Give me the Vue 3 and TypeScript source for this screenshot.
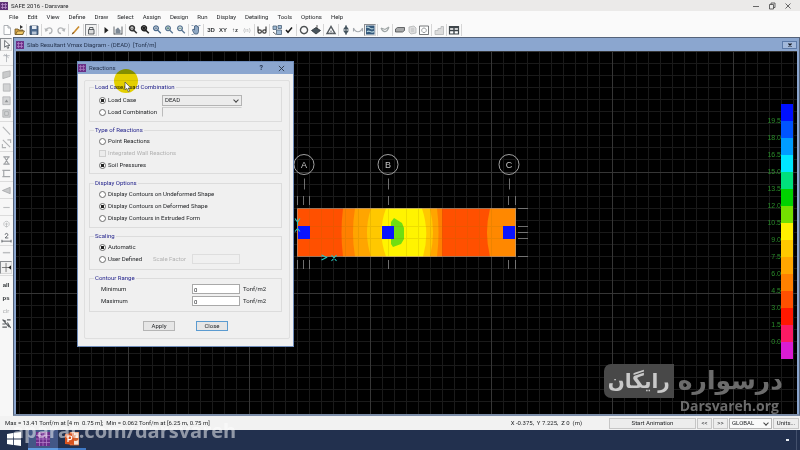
<script setup lang="ts">
import { ref } from 'vue'

interface Shape { d: string; f?: string; s?: string; w?: number }
interface Tool { name: string; shapes?: Shape[]; text?: string; dim?: boolean; boxed?: boolean }

const menus = ['File', 'Edit', 'View', 'Define', 'Draw', 'Select', 'Assign', 'Design', 'Run', 'Display', 'Detailing', 'Tools', 'Options', 'Help']

const ink = '#3c4248'
const soft = '#b4b6b8'
const lens = 'M5 1.8a2.4 2.4 0 1 0 .01 0M6.8 6.3l3 3'

const toolGroups: Tool[][] = [
  [
    { name: 'New', shapes: [{ d: 'M3 1.5h4l2.5 2.5v6.5h-6.5zM7 1.5v2.5h2.5', f: '#fff', s: '#9b9ea3' }] },
    { name: 'Open', shapes: [{ d: 'M2 5h3l1 1h4v4.500h-8z', f: '#d9a441', s: '#6b5426' }, { d: 'M2.500 10.500l2-3.500h7l-2 3.500z', f: '#f0c766', s: '#6b5426' }, { d: 'M7 1l3 2-3 2z', f: '#333' }] }
  ],
  [{ name: 'Save', shapes: [{ d: 'M2 2h8v8.500h-8z', f: '#4d6a8f', s: '#33475f' }, { d: 'M4 2h4.500v3h-4.500z', f: '#e8edf3' }, { d: 'M4 7.500h4.500v3h-4.500z', f: '#b9c6d6' }] }],
  [
    { name: 'Undo', shapes: [{ d: 'M3 6c1-3 6-3 6 .5 0 2-1.500 3-3 3', s: soft, w: 1.3 }, { d: 'M1.500 4l1 4 3-2z', f: soft }] },
    { name: 'Redo', shapes: [{ d: 'M9 6c-1-3-6-3-6 .5 0 2 1.500 3 3 3', s: soft, w: 1.3 }, { d: 'M10.500 4l-1 4-3-2z', f: soft }] }
  ],
  [{ name: 'Refresh', shapes: [{ d: 'M3 9.500l6-7', s: '#c98a2c', w: 1.6 }, { d: 'M2.300 10.300l1-2', s: '#5c3c16', w: 1 }] }],
  [{ name: 'Lock', boxed: true, shapes: [{ d: 'M3.500 5.500h5.500v4.500h-5.500z', f: '#dcdcdc', s: ink }, { d: 'M4.500 5.500v-2h3.500v2', s: ink }] }],
  [
    { name: 'Run', shapes: [{ d: 'M4.500 3l4 3.200-4 3.200z', f: '#222' }] },
    { name: 'Run detailing', shapes: [{ d: 'M2 2.500v8M10 2.500v8M2 10h8', s: ink }, { d: 'M3.500 5.500l2.500-2 2.500 3v3h-5z', f: '#7b8794' }] }
  ],
  [
    { name: 'Rubber band zoom', shapes: [{ d: lens, s: '#333', w: 1.6 }, { d: 'M3.500 4.200h3', s: '#333' }] },
    { name: 'Zoom all', shapes: [{ d: lens, s: '#222', w: 1.6 }, { d: 'M3.500 2.800h3v3h-3z', f: '#222' }] },
    { name: 'Restore zoom', shapes: [{ d: lens, s: '#4b6a8c', w: 1.3 }, { d: 'M3.500 4.200h3M5 2.700v3', s: '#4b6a8c' }] },
    { name: 'Zoom in', shapes: [{ d: lens, s: '#5a7694', w: 1.3 }, { d: 'M3.500 4.200h3M5 2.700v3', s: '#2e6a60' }] },
    { name: 'Zoom out', shapes: [{ d: lens, s: '#5a7694', w: 1.3 }, { d: 'M3.500 4.200h3', s: '#2e6a60' }] }
  ],
  [{ name: 'Pan', shapes: [{ d: 'M3 5l1.500 1v-4h1v-.5h1v.5h1v.8h1v5l-1 2.200h-3l-2-3.500z', f: '#8fa8c4', s: '#3d5877' }, { d: 'M1.500 1.500h2M8.500 1.500h2M1.500 10.500h2', s: '#7c93ad' }] }],
  [
    { name: '3D view', text: '3D' },
    { name: 'Plan view', text: 'XY' },
    { name: 'Elevation view', text: '↑z' },
    { name: 'Named view', text: '(n)', dim: true }
  ],
  [{ name: 'Display options', shapes: [{ d: 'M2 2.500v5M10 2.500v5M2 7.500a1.700 1.700 0 1 0 3.400 0a1.700 1.700 0 1 0-3.400 0M6.700 7.500a1.700 1.700 0 1 0 3.400 0a1.700 1.700 0 1 0-3.400 0', s: '#3a3a3a', w: 1.2 }] }],
  [
    { name: 'Assign to group', shapes: [{ d: 'M2 2h3.500v3.500h-3.500zM7 1.500h3.500v3h-3.500zM5.500 6h5v4.500h-5z', f: '#9fb9d2', s: '#4c6278' }, { d: 'M2 8l3 2.500', s: ink }] },
    { name: 'Object options', shapes: [{ d: 'M3 6l2 2.300 4-4.800', s: '#1c1c1c', w: 1.5 }] }
  ],
  [
    { name: 'Property circle', shapes: [{ d: 'M6 2.500a3.600 3.600 0 1 0 .01 0', s: '#4c5052', w: 1.4 }] },
    { name: 'Point load', shapes: [{ d: 'M1.500 6.500l4.500-3 4.500 3-4.500 3.500z', f: '#48545c', s: '#2d3439' }, { d: 'M7 1v4', s: '#333' }] }
  ],
  [{ name: 'Undeformed shape', shapes: [{ d: 'M2 9.500l4-7 4 7z', f: '#fff', s: '#555b60', w: 1.5 }, { d: 'M4.500 9.500l1.500-3 1.500 3', s: '#8a8f94' }] }],
  [
    { name: 'Show loads', shapes: [{ d: 'M6 1.500l3 4h-6zM3 6.500h6l-3 4z', f: '#44545e' }, { d: 'M6 1v10', s: '#44545e' }] },
    { name: 'Deformed shape', shapes: [{ d: 'M1.500 4c2 5 7 5 9 0M1.500 4v3.500M10.500 4v3.500', s: '#a4a9ae', w: 1.1 }] },
    { name: 'Slab forces', boxed: true, shapes: [{ d: 'M2 1.500h8.500v9h-8.500z', f: '#34597c' }, { d: 'M2.500 3.500c3-2 3 3 7 1M3 8c2-3 4 2 7-.5', s: '#b9d6df', w: 1.2 }] }
  ],
  [{ name: 'Strip forces', shapes: [{ d: 'M2 4c2 5 6 5 8-1M2 4l4 1.500 4-2.500', s: '#9fa6a6', w: 1.1 }] }],
  [
    { name: 'Beam design', shapes: [{ d: 'M1.500 5l2-1.500h7v3l-2 1.500h-7z', f: '#a7a9aa', s: '#484a4c' }] },
    { name: 'Slab design', shapes: [{ d: 'M3 3l5-1 2 2v5l-5 1-2-2z', f: '#dedede', s: soft }, { d: 'M5 5h3M5 7h3', s: soft }] },
    { name: 'Punching check', shapes: [{ d: 'M1.500 2h9v8.500h-9z', f: '#fff', s: '#55595c' }, { d: 'M6 4a2.300 2.300 0 1 0 .01 0', s: '#85898c' }] }
  ],
  [{ name: 'Detailing', shapes: [{ d: 'M2 10.500v-4h3v-2h3v-2h2.500v8z', f: '#dcdcdc', s: soft }] }],
  [{ name: 'Tables', shapes: [{ d: 'M1.500 2.500h9v7.500h-9z', f: '#fff', s: '#3f464b', w: 1.2 }, { d: 'M1.500 3.500h9M1.500 6.500h9M6 2.500v7.500', s: '#3f464b', w: 1.4 }] }]
]

const sideGroups: Tool[][] = [
  [
    { name: 'Select', boxed: true, shapes: [{ d: 'M4 1.500v7.500l2-1.700 1.300 3 1.200-.6-1.300-2.700h2.500z', f: '#fff', s: '#3a3f44' }] },
    { name: 'Reshape', shapes: [{ d: 'M6 2v9M2.500 4h7M3.500 2.500l5 4', s: '#a5a9ae' }] }
  ],
  [
    { name: 'Draw slab', shapes: [{ d: 'M2 3.500l8-1.500v6l-8 2.500z', f: '#c9cacb', s: '#a8aaac' }] },
    { name: 'Draw rectangle', shapes: [{ d: 'M2.500 2h7.500v8h-7.500z', f: '#d2d3d4', s: '#aaacae' }] },
    { name: 'Quick draw slab', shapes: [{ d: 'M2 2h8v8.500h-8z', f: '#d4d5d6', s: '#aaacae' }, { d: 'M4 8l2-3 2 3z', f: '#8f9294' }] },
    { name: 'Quick draw area', shapes: [{ d: 'M2 2h8v8h-8zM4 4h4v4h-4z', f: '#d4d5d6', s: '#a1a3a5' }] }
  ],
  [
    { name: 'Draw line', shapes: [{ d: 'M2 2l8 8.500', s: '#b4b6b8', w: 1.2 }] },
    { name: 'Quick draw line', shapes: [{ d: 'M2 2l8 8M1.500 6.500v4h4M7 2h3.500v3.500', s: '#b0b2b4', w: 1.2 }] }
  ],
  [
    { name: 'Draw column', shapes: [{ d: 'M2.500 2h7M2.500 10h7M3.500 2l5 8M8.500 2l-5 8', s: '#9c9fa2', w: 1.2 }] },
    { name: 'Draw wall', shapes: [{ d: 'M10 2.500h-7v7h7M1.500 2.500h2M1.500 9.500h2', s: '#a3a6a9', w: 1.3 }] }
  ],
  [{ name: 'Draw strip', shapes: [{ d: 'M1.500 6l8.500-3.500v7z', f: '#c7c9ca', s: '#a0a2a4' }] }],
  [{ name: 'Draw tendon', shapes: [{ d: 'M2.500 6h7', s: '#bcbec0', w: 1.2 }] }],
  [
    { name: 'Draw point', shapes: [{ d: 'M6 2.500a3 3 0 1 0 .01 0M4.500 5.500h3M6 4v5', s: '#b4b6b8' }] },
    { name: 'Dimension', shapes: [{ d: 'M1 8.500v3M11 8.500v3M1 10h10', s: '#3c4248' }, { d: 'M4.500 3c0-2 3-2 3 0 0 1.500-2 2-3 3.500h3.500', s: '#3c4248' }] }
  ],
  [
    { name: 'Design strip', shapes: [{ d: 'M2 4h8', s: '#bcbec0', w: 1.6 }] },
    { name: 'Snap', boxed: true, shapes: [{ d: 'M5.500 1v10M1 6h8', s: '#555' }, { d: 'M8 6l3-2.500v5z', f: '#222' }] }
  ],
  [
    { name: 'Select all', text: 'all' },
    { name: 'Previous selection', text: 'ps' },
    { name: 'Clear selection', text: 'clr', dim: true },
    { name: 'Intersecting line', shapes: [{ d: 'M1.500 2l4 1.500M6.500 2h4M1.500 6.500h3.500M7 5l3.500 6M1.500 10h5M2 2l7 8', s: '#5a5e62', w: 1.2 }] }
  ]
]

const gridLetters = [{ label: 'A', x: 304 }, { label: 'B', x: 388 }, { label: 'C', x: 509 }]
const tickX = [297.5, 303.5, 309.5, 388.5, 508.5, 515.5]
const tickY = [208.5, 226.5, 232.5, 238.5, 256.5]

const legend = [
  { c: '#0010ff', v: '19.5' }, { c: '#0054ff', v: '18.0' }, { c: '#009cff', v: '16.5' },
  { c: '#00e6ff', v: '15.0' }, { c: '#00e07c', v: '13.5' }, { c: '#00d200', v: '12.0' },
  { c: '#74e000', v: '10.5' }, { c: '#fff000', v: '9.0' }, { c: '#ffc800', v: '7.5' },
  { c: '#ffa600', v: '6.0' }, { c: '#ff8000', v: '4.5' }, { c: '#ff5000', v: '3.0' },
  { c: '#ff1800', v: '1.5' }, { c: '#fb1a64', v: '0.0' }, { c: '#da1cd2', v: '' }
]

const source = ref('case')
const reaction = ref('soil')
const contours = ref('deformed')
const scaling = ref('auto')
const minimum = ref('0')
const maximum = ref('0')
</script>

<template>
  <div class="app">
    <header class="titlebar">
      <svg class="logo" viewBox="0 0 8 8"><rect width="8" height="8" fill="#5e3176" /><path d="M1 2.500h6M1 5.500h6M2.500 1v6M5.500 1v6" stroke="#b78bc9" stroke-width=".8" /></svg>
      <h1>SAFE 2016 - Darsvare</h1>
      <div class="winbtns">
        <button aria-label="Minimize"><svg viewBox="0 0 8 8"><path d="M1 4.500h6" /></svg></button>
        <button aria-label="Restore"><svg viewBox="0 0 8 8"><path d="M1.500 2.500h4v4.500h-4zM3 2.500v-1.500h4v4.500h-1.500" /></svg></button>
        <button aria-label="Exit"><svg viewBox="0 0 8 8"><path d="M1.500 1.500l5 5M6.500 1.500l-5 5" /></svg></button>
      </div>
    </header>

    <nav class="menubar">
      <button v-for="m in menus" :key="m">{{ m }}</button>
    </nav>

    <div class="toolbar">
      <div v-for="(g, gi) in toolGroups" :key="gi" class="group">
        <button v-for="t in g" :key="t.name" :aria-label="t.name" :class="{ boxed: t.boxed, dim: t.dim }">
          <template v-if="t.text">{{ t.text }}</template>
          <svg v-else viewBox="0 0 12 12"><path v-for="(p, i) in t.shapes" :key="i" :d="p.d" :fill="p.f ?? 'none'" :stroke="p.s ?? 'none'" :stroke-width="p.w ?? 0.8" /></svg>
        </button>
      </div>
    </div>

    <main class="work">
      <div class="sidebar">
        <div v-for="(g, gi) in sideGroups" :key="gi" class="sidegroup">
          <button v-for="t in g" :key="t.name" :aria-label="t.name" :class="{ boxed: t.boxed, dim: t.dim }">
            <template v-if="t.text">{{ t.text }}</template>
            <svg v-else viewBox="0 0 12 12"><path v-for="(p, i) in t.shapes" :key="i" :d="p.d" :fill="p.f ?? 'none'" :stroke="p.s ?? 'none'" :stroke-width="p.w ?? 0.8" /></svg>
          </button>
        </div>
      </div>

      <section class="child">
        <div class="childtitle">
          <svg class="logo" viewBox="0 0 8 8"><rect width="8" height="8" fill="#6b3187" /><path d="M1 2.500h6M1 5.500h6M2.500 1v6M5.500 1v6" stroke="#b07cc6" stroke-width=".8" /></svg>
          <h2>Slab Resultant Vmax Diagram - (DEAD)&nbsp; [Tonf/m]</h2>
          <button aria-label="Close diagram"><svg viewBox="0 0 6 6"><path d="M1.500 1.500l3 3M4.500 1.500l-3 3" /></svg></button>
        </div>
        <div class="canvas">
          <svg class="gridfill">
            <defs>
              <pattern id="major" x="112" y="0" width="121" height="121" patternUnits="userSpaceOnUse">
                <path v-for="n in 9" :key="'v' + n" :d="`M${n * 12 + 0.5} 0v121`" stroke="#1a1a1a" />
                <path v-for="n in 9" :key="'h' + n" :d="`M0 ${n * 12 + 0.5}h121`" stroke="#1a1a1a" />
                <path d="M.5 0v121M0 .5h121" stroke="#363636" />
              </pattern>
            </defs>
            <rect width="100%" height="100%" fill="url(#major)" />
          </svg>

          <svg class="model" viewBox="16 51 560 340">
            <g stroke-width="1">
              <path d="M297 208.500h219v48h-219z" fill="#ff5000" />
              <path d="M343 208.500h99v48h-99q-3-24 0-48z" fill="#ff8000" />
              <path d="M355 208.500h82q3 24 0 48h-82q-4-24 0-48z" fill="#ffa500" />
              <path d="M371 208.500h59q6 24 0 48h-59q-8-24 0-48z" fill="#ffc800" />
              <path d="M386 208.500h36q8 24 1 48h-37q-9-24 0-48z" fill="#fff400" />
              <path d="M490 208.500h26v48h-26q-6-24 0-48z" fill="#ff8800" />
              <path d="M394 218l8 5 2 5v11l-3 5-8 3-2-3v-22z" fill="#70de10" />
              <path d="M309.500 209v47M321.500 209v47M333.500 209v47M345.500 209v47M358.500 209v47M370.500 209v47M406.500 209v47M418.500 209v47M430.500 209v47M442.500 209v47M455.500 209v47M467.500 209v47M479.500 209v47M491.500 209v47M297 226.500h218M297 238.500h218M388.500 209v47" stroke="#9c7000" opacity=".16" />
              <path d="M297.500 208.500h218v48h-218z" fill="none" stroke="#a8a090" opacity=".6" />
              <path d="M298 226h12v13h-12zM382 226h12v13h-12zM503 226h12v13h-12z" fill="#0a14ff" />
            </g>
            <path v-for="x in tickX" :key="x" :d="`M${x} 196v9M${x} 260v9`" stroke="#8a8a8a" stroke-width=".8" />
            <path v-for="y in tickY" :key="y" :d="`M518 ${y}h10`" stroke="#8a8a8a" stroke-width=".8" />
            <g v-for="g in gridLetters" :key="g.label">
              <circle :cx="g.x" cy="164.500" r="10" fill="none" stroke="#b0b0b0" stroke-width=".9" />
              <path :d="`M${g.x + 0.5} 178.500v11`" stroke="#8a8a8a" stroke-width=".8" />
              <text :x="g.x" y="168" text-anchor="middle" class="letter">{{ g.label }}</text>
            </g>
            <path d="M295 218.500l2.500 3.500 2.500-3.500M297.500 222v3.500M295 231.500l2.500-3 2.500 3M321.500 255l5 2.500-5 2.500M331.500 255l5 6M336.500 255l-5 6" fill="none" stroke="#28c4bc" stroke-width="1.100" />
          </svg>

          <ul class="legend">
            <li v-for="s in legend" :key="s.c"><span class="value">{{ s.v }}</span><i :style="{ background: s.c }"></i></li>
          </ul>

          <div class="brand" dir="rtl">
            <div class="brandline"><span>درسواره</span><b>رایگان</b></div>
            <div class="brandurl" dir="ltr">Darsvareh.org</div>
          </div>
        </div>
      </section>
    </main>

    <footer class="status">
      <span class="range">Max = 13.41 Tonf/m at [4 m&nbsp; 0.75 m];&nbsp; Min = 0.062 Tonf/m at [6.25 m, 0.75 m]</span>
      <span class="coords">X -0.375,&nbsp; Y 7.225,&nbsp; Z 0&nbsp; (m)</span>
      <button class="start">Start Animation</button>
      <button class="step">&lt;&lt;</button>
      <button class="step">&gt;&gt;</button>
      <span class="pick global"><select aria-label="Coordinate system"><option>GLOBAL</option></select></span>
      <button class="units">Units...</button>
    </footer>

    <div class="taskbar">
      <button class="task" aria-label="Start"><svg viewBox="0 0 14 14"><path d="M0 2l6-.9v5.500h-6zM6.800 1l7.200-1v6.600h-7.200zM0 7.400h6v5.500l-6-.9zM6.800 7.400h7.200v6.600l-7.200-1z" fill="#fff" /></svg></button>
      <button class="task active" aria-label="SAFE"><svg viewBox="0 0 14 14"><rect width="14" height="14" fill="#6d2d8c" /><path d="M0 3.500h14M0 7h14M0 10.500h14M3.500 0v14M7 0v14M10.500 0v14" stroke="#b985cf" stroke-width=".7" /></svg></button>
      <button class="task open" aria-label="PowerPoint"><svg viewBox="0 0 14 14"><path d="M5 0h9v13h-9z" fill="#f6e3d8" stroke="#d2622f" stroke-width=".8" /><path d="M10.500 3v3h3a3 3 0 1 1-3-3" fill="#d2622f" /><path d="M0 2l9-1v12l-9-1z" fill="#d9531e" /><path d="M3 10v-6h2a1.800 1.800 0 0 1 0 3.600h-2" fill="none" stroke="#fff" stroke-width="1.200" /></svg></button>
      <span class="tray"></span>
    </div>
    <div class="watermark">aparat.com/darsvareh</div>

    <form class="dialog" role="dialog" aria-label="Reactions" @submit.prevent>
      <div class="dialogtitle">
        <svg class="logo" viewBox="0 0 8 8"><rect width="8" height="8" fill="#6b3187" /><path d="M1 2.500h6M1 5.500h6M2.500 1v6M5.500 1v6" stroke="#a273ba" stroke-width=".8" /></svg>
        <h2>Reactions</h2>
        <button type="button" class="help">?</button>
        <button type="button" aria-label="Close dialog"><svg viewBox="0 0 8 8"><path d="M1 1l6 6M7 1l-6 6" /></svg></button>
      </div>
      <div class="panel">
        <fieldset class="first">
          <legend>Load Case/Load Combination</legend>
          <div class="row">
            <label class="lead"><input v-model="source" type="radio" value="case" name="source" />Load Case</label>
            <span class="pick"><select aria-label="Load case name"><option>DEAD</option></select></span>
          </div>
          <div class="row">
            <label class="lead"><input v-model="source" type="radio" value="combo" name="source" />Load Combination</label>
            <input class="blank" type="text" disabled aria-label="Load combination name" />
          </div>
        </fieldset>
        <fieldset class="second">
          <legend>Type of Reactions</legend>
          <label class="row"><input v-model="reaction" type="radio" value="point" name="reaction" />Point Reactions</label>
          <label class="row off"><input type="checkbox" disabled />Integrated Wall Reactions</label>
          <label class="row"><input v-model="reaction" type="radio" value="soil" name="reaction" />Soil Pressures</label>
        </fieldset>
        <fieldset class="third">
          <legend>Display Options</legend>
          <label class="row"><input v-model="contours" type="radio" value="undeformed" name="contours" />Display Contours on Undeformed Shape</label>
          <label class="row"><input v-model="contours" type="radio" value="deformed" name="contours" />Display Contours on Deformed Shape</label>
          <label class="row"><input v-model="contours" type="radio" value="extruded" name="contours" />Display Contours in Extruded Form</label>
        </fieldset>
        <fieldset>
          <legend>Scaling</legend>
          <label class="row"><input v-model="scaling" type="radio" value="auto" name="scaling" />Automatic</label>
          <div class="row">
            <label class="user"><input v-model="scaling" type="radio" value="user" name="scaling" />User Defined</label>
            <label class="off factor" for="factor">Scale Factor</label>
            <input id="factor" class="num" type="text" disabled />
          </div>
        </fieldset>
        <fieldset>
          <legend>Contour Range</legend>
          <div class="row"><label class="bound" for="min">Minimum</label><input id="min" v-model="minimum" class="num" type="text" /><span class="unit">Tonf/m2</span></div>
          <div class="row"><label class="bound" for="max">Maximum</label><input id="max" v-model="maximum" class="num" type="text" /><span class="unit">Tonf/m2</span></div>
        </fieldset>
        <div class="actions">
          <button type="button">Apply</button>
          <button type="button" class="default">Close</button>
        </div>
      </div>
    </form>

    <div class="halo"></div>
    <svg class="pointer" viewBox="0 0 8 12">
      <path d="M1 1v8l1.800-1.600 1.500 3.300 1.300-.6-1.400-3.100h2.600z" fill="#fff" stroke="#444" stroke-width=".7" />
    </svg>
  </div>
</template>

<style>
body { margin: 0; background: #22304e; }
</style>

<style scoped>
.app {
  position: relative;
  display: flex;
  flex-direction: column;
  min-height: 100vh;
  overflow: hidden;
  background: #f2f2f2;
  color: #1e2023;
  font: 6px/8px Roboto, "Liberation Sans", Arial, sans-serif;
}
* { box-sizing: border-box; }
button, input, select { font: inherit; color: inherit; margin: 0; padding: 0; border: 0; background: none; border-radius: 0; }
h1, h2 { margin: 0; font: inherit; white-space: nowrap; }
svg { display: block; }
.logo { width: 8px; height: 8px; flex: none; }

.titlebar { display: flex; align-items: center; height: 11px; padding: 0 8px 0 0; gap: 3px; background: #ebeae9; }
.winbtns { display: flex; gap: 8px; margin-left: auto; }
.winbtns button, .winbtns svg { width: 8px; height: 8px; }
.winbtns path { fill: none; stroke: #444; stroke-width: 0.8; }

.menubar { display: flex; height: 12px; padding-left: 9px; gap: 9px; align-items: center; background: #fafafa; }

.toolbar { display: flex; height: 14px; padding-left: 1px; align-items: center; background: #fafafa; }
.group { display: flex; padding-right: 1px; margin-right: 1px; border-right: 1px solid #d6d6d6; }
.group button, .sidegroup button { display: grid; place-items: center; width: 12px; height: 12px; font: bold 6px/8px "Liberation Sans", Arial, sans-serif; color: #33373a; }
.group svg { width: 12px; height: 12px; }
.group .boxed, .sidegroup .boxed { border: 1px solid; border-color: #8b8e92 #d8d8d8 #d8d8d8 #8b8e92; background: #f1f1f1; }
.boxed svg { margin: -1px; }
.group .dim, .sidegroup .dim { color: #a9abad; font-weight: normal; }

.work { display: flex; flex: 1; min-height: 0; }
.sidebar { display: flex; flex-direction: column; width: 13px; padding-top: 1px; background: #f7f7f7; flex: none; }
.sidegroup { padding-bottom: 1px; margin-bottom: 2px; border-bottom: 1px solid #dcdcdc; }
.sidegroup:last-child { border: 0; }
.sidegroup button { height: 13px; }
.sidegroup svg { width: 11px; height: 11px; }

.child { display: flex; flex: 1; flex-direction: column; min-width: 0; border: 1px solid #55637a; border-width: 1px 1px 2px 1px; border-bottom-color: #7c8da8; background: #8ba6cf; padding: 0 2px 0 2px; }
.childtitle { display: flex; align-items: center; height: 13px; gap: 3px; color: #24324c; }
.childtitle button { margin-left: auto; width: 15px; height: 8px; border: 1px solid #5c7aa8; display: grid; place-items: center; background: #a2b8da; }
.childtitle button svg { width: 6px; height: 6px; }
.childtitle path { fill: none; }
.childtitle button path { stroke: #10151f; stroke-width: 1.2; }
.canvas { position: relative; flex: 1; background: #000; overflow: hidden; }
.gridfill { position: absolute; inset: 0; width: 100%; height: 100%; }
.model { position: absolute; left: 0; top: 0; width: 560px; height: 340px; }
.letter { font: 9px "Liberation Sans", Arial, sans-serif; fill: #c4c4c4; }

.legend { position: absolute; right: 4px; top: 53px; margin: 0; padding: 0; list-style: none; font-family: "Liberation Sans", Arial, sans-serif; }
.legend li { display: flex; align-items: flex-end; justify-content: flex-end; height: 17px; }
.legend i { width: 12px; height: 17px; }
.value { font-size: 7px; line-height: 8px; color: #2a8c2a; margin-bottom: -4px; }

.brand { position: absolute; right: 14px; bottom: 0; color: #6c6c6c; font-family: "DejaVu Sans", sans-serif; font-weight: bold; }
.brandline { display: flex; align-items: center; gap: 4px; font-size: 25px; line-height: 34px; }
.brandline b { padding: 0 4px; border-radius: 7px 0 0 7px; background: #484848; color: #c9c9c9; font-size: 20px; }
.brandurl { font: bold 14px/16px "Open Sans", sans-serif; text-align: right; padding-right: 4px; }

.status { position: relative; z-index: 2; display: flex; align-items: center; height: 14px; gap: 1px; padding: 0 1px 0 5px; white-space: nowrap; }
.coords { margin-left: auto; margin-right: 26px; }
.status button { height: 11px; border: 1px solid #c6c6c6; background: #ededed; }
.start { width: 87px; }
.step { width: 15px; }
.units { width: 26px; }

.pick { position: relative; display: block; }
.pick select { display: block; width: 100%; height: 11px; padding: 0 2px; appearance: none; border: 1px solid #b4b4b4; background: #ececec; }
.pick::after { content: ""; position: absolute; right: 4px; top: 3px; width: 3px; height: 3px; border: solid #444; border-width: 0 1px 1px 0; transform: rotate(45deg); }
.global { width: 43px; }
.global select { background: #fafafa; }

.taskbar { display: flex; height: 20px; background: #22304e; padding-right: 3px; }
.task { display: grid; place-items: center; width: 28px; border-bottom: 2px solid transparent; }
.task svg { width: 14px; height: 14px; }
.task.active { width: 30px; background: #435786; border-color: #5f9be0; }
.task.open { border-color: #3f78c4; }
.tray { margin-left: auto; width: 11px; border-right: 1px solid #43506c; position: relative; }
.tray::before { content: ""; position: absolute; left: 0; top: 9px; width: 3px; height: 2px; background: #e8ecf2; }
.watermark { position: absolute; z-index: 1; left: 12px; bottom: 7px; font: bold 20px/24px "Open Sans", sans-serif; color: #fff; opacity: 0.5; white-space: nowrap; pointer-events: none; }

.dialog { position: absolute; left: 77px; top: 61px; width: 217px; border: 1px solid #6f8cba; background: #f0f0f0; padding-bottom: 7px; white-space: nowrap; }
.dialogtitle { display: flex; align-items: center; height: 12px; gap: 3px; padding-right: 8px; background: #8ba6cf; color: #24324c; }
.help { margin-left: auto; margin-right: 12px; font-weight: bold; font-size: 7px; }
.dialogtitle button svg { width: 7px; height: 7px; }
.dialogtitle button path { fill: none; stroke: #26303f; stroke-width: 1; }
.panel { margin: 6px 3px 0 6px; padding: 2px 7px 7px 4px; border: 1px solid #dfdfdf; border-radius: 2px; }
fieldset { margin: 0 0 4px; padding: 1px 0 4px 9px; border: 1px solid #dcdcdc; min-width: 0; }
fieldset.first { padding-top: 3px; padding-bottom: 3px; }
fieldset.second { padding-bottom: 2px; margin-bottom: 5px; }
fieldset.third { padding-bottom: 3px; }
legend { margin-left: -5px; padding: 0 1px; height: 8px; color: #23238c; }
.row { display: flex; align-items: center; height: 12px; }
.row label { display: flex; align-items: center; }
.lead { width: 63px; }
.user { width: 54px; }
.factor { width: 39px; }
.bound { width: 93px; padding-left: 2px; }
.off { color: #b2b2b2; }
.unit { padding-left: 3px; }
input[type="radio"], input[type="checkbox"] { appearance: none; width: 7px; height: 7px; margin-right: 2px; border: 1px solid #6e6e6e; background: #fff; flex: none; }
input[type="radio"] { border-radius: 50%; }
input[type="radio"]:checked { background: radial-gradient(circle, #222 0 1.5px, #fff 2px); }
input[type="checkbox"] { border-color: #cfcfcf; background: #ececec; }
.num { width: 48px; height: 10px; padding: 0 1px; border: 1px solid #a9a9a9; background: #fff; }
.num:disabled { border-color: #dedede; background: #f0f0f0; }
.blank { width: 80px; height: 10px; border: 1px solid #f0f0f0; border-left-color: #bcbcbc; border-top-color: #cfcfcf; }
.row .pick { width: 80px; }
.actions { display: flex; gap: 21px; margin-top: 9px; padding-left: 54px; }
.actions button { width: 32px; height: 10px; border: 1px solid #b5b5b5; background: #e6e6e6; }
.actions .default { border-color: #5b9bd0; }

.halo { position: absolute; left: 114px; top: 69px; width: 24px; height: 24px; border-radius: 50%; background: #f2dc00; mix-blend-mode: multiply; pointer-events: none; }
.pointer { position: absolute; left: 124px; top: 81px; width: 8px; height: 12px; pointer-events: none; }
</style>
